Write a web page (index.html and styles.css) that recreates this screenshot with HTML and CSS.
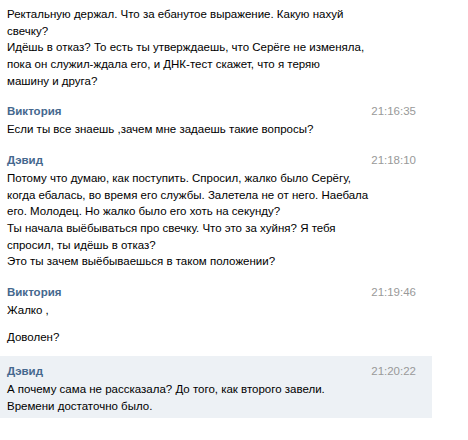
FILE: index.html
```html
<!DOCTYPE html>
<html lang="ru">
<head>
  <meta charset="UTF-8" />
  <title>Диалог</title>
  <link rel="stylesheet" href="styles.css">
</head>
<body>

  <div class="history">

    <div class="msg first">
      <p>Ректальную держал. Что за ебанутое выражение. Какую нахуй<br>свечку?<br>Идёшь в отказ? То есть ты утверждаешь, что Серёге не изменяла,<br>пока он служил-ждала его, и ДНК-тест скажет, что я теряю<br>машину и друга?</p>
    </div>

    <div class="msg">
      <div class="head">
        <span class="name">Виктория</span>
        <span class="time">21:16:35</span>
      </div>
      <p>Если ты все знаешь ,зачем мне задаешь такие вопросы?</p>
    </div>

    <div class="msg">
      <div class="head">
        <span class="name">Дэвид</span>
        <span class="time">21:18:10</span>
      </div>
      <p>Потому что думаю, как поступить. Спросил, жалко было Серёгу,<br>когда ебалась, во время его службы. Залетела не от него. Наебала<br>его. Молодец. Но жалко было его хоть на секунду?<br>Ты начала выёбываться про свечку. Что это за хуйня? Я тебя<br>спросил, ты идёшь в отказ?<br>Это ты зачем выёбываешься в таком положении?</p>
    </div>

    <div class="msg">
      <div class="head">
        <span class="name">Виктория</span>
        <span class="time">21:19:46</span>
      </div>
      <p>Жалко ,</p>
      <p class="next">Доволен?</p>
    </div>

    <div class="msg unread">
      <div class="head">
        <span class="name">Дэвид</span>
        <span class="time">21:20:22</span>
      </div>
      <p>А почему сама не рассказала? До того, как второго завели.<br>Времени достаточно было.</p>
    </div>

  </div>

</body>
</html>
```

FILE: styles.css
```css
body {
  margin: 0;
  background: #fff;
  color: #000;
  font-family: 'Liberation Sans', Arial, sans-serif;
  font-size: 11.5px;
}

.history {
  width: 432px;
}

.msg {
  padding: 7px 16px 5px 7px;
  margin-top: 2px;
}

.msg.first {
  padding-top: 6px;
  margin-top: 0;
}

.msg p {
  margin: 0;
  line-height: 16.67px;
  white-space: nowrap;
}

.msg p.next {
  margin-top: 10px;
}

.head {
  display: flex;
  justify-content: space-between;
  height: 18px;
  line-height: 17px;
}

.name {
  font-weight: bold;
  color: #45688e;
}

.time {
  color: #999;
}

.msg.unread {
  background: #edf1f5;
  margin-top: 6px;
  padding-bottom: 3px;
}
```
